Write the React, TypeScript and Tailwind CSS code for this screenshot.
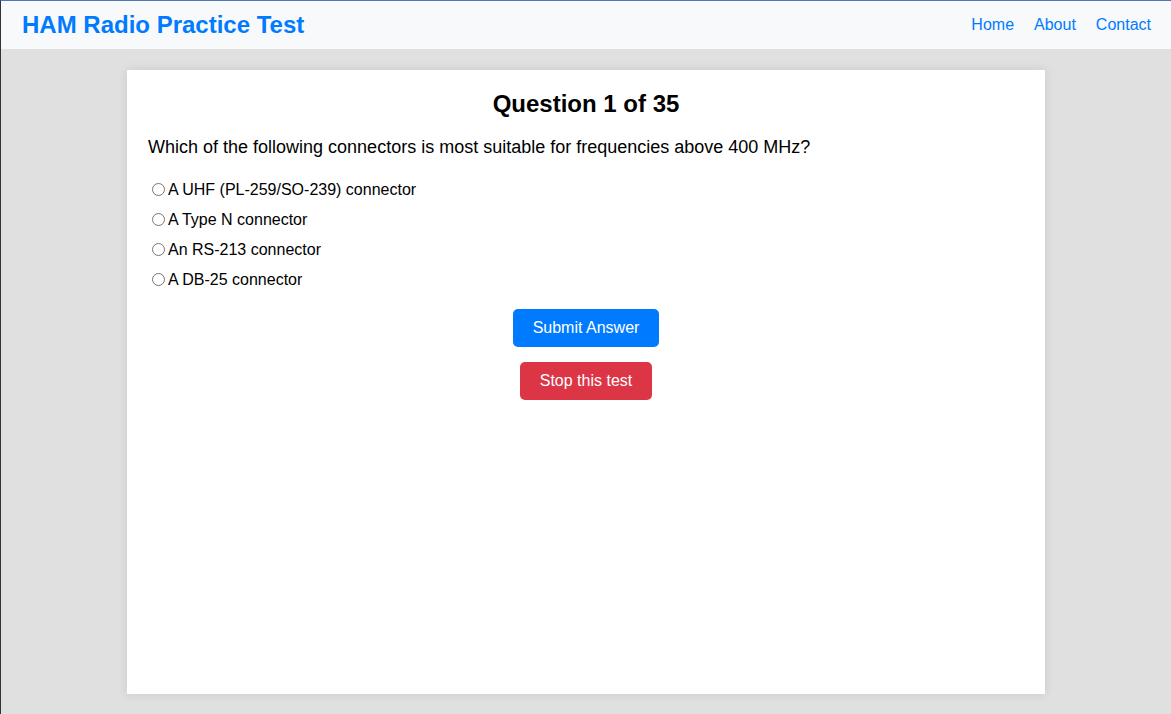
import React from "react";

const options = [
  "A UHF (PL-259/SO-239) connector",
  "A Type N connector",
  "An RS-213 connector",
  "A DB-25 connector",
];

export default function App() {
  return (
    <div
      className="min-h-[714px] h-[714px] bg-[#e0e0e0] border-l border-l-[#333333] border-t border-t-[#4a78b5] flex flex-col overflow-hidden"
      style={{ fontFamily: '"Liberation Sans", Arial, sans-serif' }}
    >
      <header className="h-[48px] bg-[#f8f9fa] flex items-center justify-between pl-[21px] pr-[20px] shrink-0">
        <h1 className="text-[24px] font-bold text-[#007bff] leading-none">HAM Radio Practice Test</h1>
        <nav className="flex gap-[20px] text-[16px] text-[#007bff]">
          <a href="#">Home</a>
          <a href="#">About</a>
          <a href="#">Contact</a>
        </nav>
      </header>
      <main className="flex-1 pt-[21px]">
        <div className="mx-auto w-[918px] h-[624px] bg-white shadow-[0_0_10px_rgba(0,0,0,0.1)] px-[21px] pt-[20px] text-black">
          <h2 className="text-[24px] font-bold text-center leading-[28px]">Question 1 of 35</h2>
          <p className="mt-[19px] text-[18px] leading-[21px]">
            Which of the following connectors is most suitable for frequencies above 400 MHz?
          </p>
          <div className="mt-[23px] flex flex-col gap-[12px]">
            {options.map((o) => (
              <label key={o} className="flex items-center text-[16px] leading-[18px]">
                <input type="radio" name="q" className="m-[3px_3px_0_4px] w-[13px] h-[13px] relative top-[-2px]" />
                <span>{o}</span>
              </label>
            ))}
          </div>
          <div className="mt-[20px] flex flex-col items-center gap-[15px]">
            <button className="h-[38px] w-[146px] bg-[#007bff] text-white text-[16px] rounded-[5px]">
              Submit Answer
            </button>
            <button className="h-[38px] w-[132px] bg-[#dc3545] text-white text-[16px] rounded-[5px]">
              Stop this test
            </button>
          </div>
        </div>
      </main>
    </div>
  );
}
